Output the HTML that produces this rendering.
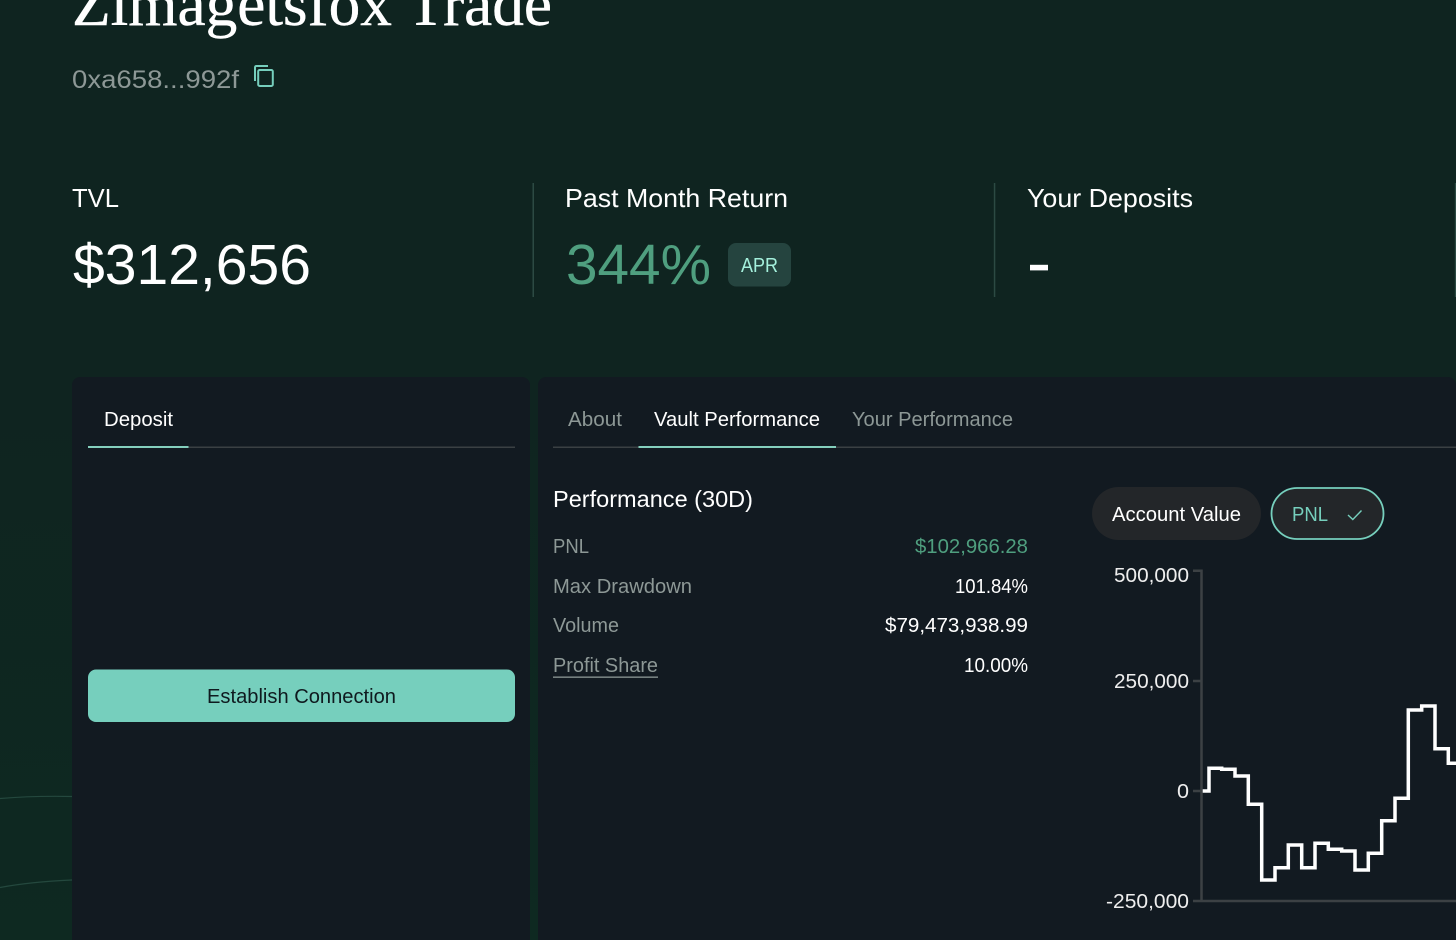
<!DOCTYPE html>
<html lang="en">
<head>
<meta charset="utf-8">
<title>Zimagetsfox Trade</title>
<style>
html,body{margin:0;padding:0;width:1456px;height:940px;overflow:hidden;background:#0f2420}
#page{position:absolute;left:0;top:0;width:1456px;height:940px;overflow:hidden}
#bg{position:absolute;left:0;top:0;width:1456px;height:940px;background:linear-gradient(180deg,#0f2420 0%,#0f2420 40%,#0e2921 100%)}
.panel{position:absolute;top:377px;height:563px;background:#121a21;border-radius:8px 8px 0 0}
svg{position:absolute;left:0;top:0}
text{font-family:"Liberation Sans",sans-serif;fill:#fff}
.g{fill:#8d9896}
</style>
</head>
<body>
<div id="page">
<div id="bg"></div>
<svg width="72" height="940">
  <path d="M0 798.500C24 796.500 48 796 72 796.500" fill="none" stroke="#24483e" stroke-width="1.200"/>
  <path d="M0 887.500C24 883 48 881 72 880" fill="none" stroke="#24483e" stroke-width="1.200"/>
</svg>
<div class="panel" style="left:72px;width:458px"></div>
<div class="panel" style="left:538px;width:918px"></div>
<svg width="1456" height="940" viewBox="0 0 1456 940">
  <text x="72" y="25" font-size="62" textLength="480" lengthAdjust="spacingAndGlyphs" stroke="#fff" stroke-width="0.400" style="font-family:'Liberation Serif',serif">Zimagetsfox Trade</text>
  <text x="72" y="88" font-size="25" textLength="167" lengthAdjust="spacingAndGlyphs" class="g">0xa658...992f</text>
  <rect x="258.200" y="70" width="14.600" height="16" rx="1.500" fill="none" stroke="#76cfbd" stroke-width="2"/>
  <path d="M255 81V67.500Q255 66 256.500 66H268" fill="none" stroke="#76cfbd" stroke-width="2"/>

  <rect x="532.500" y="183" width="1.500" height="114" fill="#2c4a43"/>
  <rect x="993.800" y="183" width="1.500" height="114" fill="#2c4a43"/>
  <rect x="1454.800" y="183" width="1.500" height="114" fill="#2c4a43"/>

  <text x="72" y="207" font-size="26" textLength="47" lengthAdjust="spacingAndGlyphs">TVL</text>
  <text x="565" y="207" font-size="26" textLength="223" lengthAdjust="spacingAndGlyphs">Past Month Return</text>
  <text x="1027" y="207" font-size="26" textLength="166" lengthAdjust="spacingAndGlyphs">Your Deposits</text>
  <text x="73" y="284" font-size="57" textLength="238" lengthAdjust="spacingAndGlyphs">$312,656</text>
  <text x="566" y="284" font-size="57" textLength="145" lengthAdjust="spacingAndGlyphs" style="fill:#4f9f7f">344%</text>
  <rect x="728" y="243" width="63" height="43.500" rx="8" fill="#25443f"/>
  <text x="741" y="272" font-size="20.500" textLength="37" lengthAdjust="spacingAndGlyphs" style="fill:#a4f0dc">APR</text>
  <rect x="1030" y="264.800" width="18" height="5.600" fill="#fff"/>

  <text x="104" y="426" font-size="20.500" textLength="69" lengthAdjust="spacingAndGlyphs">Deposit</text>
  <rect x="88" y="446.500" width="427" height="1.500" fill="#3a4043"/>
  <rect x="88" y="446" width="100.500" height="2" fill="#84cfbd"/>

  <text x="568" y="426" font-size="20.500" textLength="54" lengthAdjust="spacingAndGlyphs" class="g">About</text>
  <text x="654" y="426" font-size="20.500" textLength="166" lengthAdjust="spacingAndGlyphs">Vault Performance</text>
  <text x="852" y="426" font-size="20.500" textLength="161" lengthAdjust="spacingAndGlyphs" class="g">Your Performance</text>
  <rect x="553" y="446.500" width="903" height="1.500" fill="#3a4043"/>
  <rect x="638.500" y="446" width="197.500" height="2" fill="#84cfbd"/>

  <text x="553" y="507" font-size="23.500" textLength="200" lengthAdjust="spacingAndGlyphs">Performance (30D)</text>
  <text x="553" y="553" font-size="20.500" textLength="36" lengthAdjust="spacingAndGlyphs" class="g">PNL</text>
  <text x="553" y="593" font-size="20.500" textLength="139" lengthAdjust="spacingAndGlyphs" class="g">Max Drawdown</text>
  <text x="553" y="632" font-size="20.500" textLength="66" lengthAdjust="spacingAndGlyphs" class="g">Volume</text>
  <text x="553" y="672" font-size="20.500" textLength="105" lengthAdjust="spacingAndGlyphs" class="g">Profit Share</text>
  <rect x="553" y="676.500" width="105" height="1.300" fill="#8d9896"/>
  <text x="915" y="553" font-size="20.500" textLength="113" lengthAdjust="spacingAndGlyphs" style="fill:#4f9f7f">$102,966.28</text>
  <text x="955" y="593" font-size="20.500" textLength="73" lengthAdjust="spacingAndGlyphs">101.84%</text>
  <text x="885" y="632" font-size="20.500" textLength="143" lengthAdjust="spacingAndGlyphs">$79,473,938.99</text>
  <text x="964" y="672" font-size="20.500" textLength="64" lengthAdjust="spacingAndGlyphs">10.00%</text>

  <rect x="88" y="669.500" width="427" height="52.500" rx="8" fill="#76cfbd"/>
  <text x="207" y="703" font-size="20.500" textLength="189" lengthAdjust="spacingAndGlyphs" style="fill:#0f1a1f">Establish Connection</text>

  <rect x="1092" y="487" width="169" height="53" rx="26.500" fill="#232629"/>
  <text x="1112" y="521" font-size="20.500" textLength="129" lengthAdjust="spacingAndGlyphs">Account Value</text>
  <rect x="1271.500" y="488" width="112" height="51" rx="25.500" fill="#232629" stroke="#76cfbd" stroke-width="1.800"/>
  <text x="1292" y="521" font-size="20.500" textLength="36" lengthAdjust="spacingAndGlyphs" style="fill:#76cfbd">PNL</text>
  <path d="M1348 515L1352.800 519.500L1361.500 510.500" fill="none" stroke="#76cfbd" stroke-width="1.400"/>

  <path d="M1193 570.800H1201.500V901H1456M1193 681H1201M1193 791H1201M1193 901H1201" fill="none" stroke="#3c4144" stroke-width="2.500"/>
  <text x="1114" y="582" font-size="20.500" textLength="75" lengthAdjust="spacingAndGlyphs" style="fill:#eee">500,000</text>
  <text x="1114" y="688" font-size="20.500" textLength="75" lengthAdjust="spacingAndGlyphs" style="fill:#eee">250,000</text>
  <text x="1177" y="798" font-size="20.500" textLength="12" lengthAdjust="spacingAndGlyphs" style="fill:#eee">0</text>
  <text x="1106" y="908" font-size="20.500" textLength="83" lengthAdjust="spacingAndGlyphs" style="fill:#eee">-250,000</text>

  <path d="M1202.700 791H1209V768.300H1221.700V769.300H1235V776H1248.300V804.300H1261.700V880H1275V867.700H1288.300V845H1301.700V867.700H1315V843.300H1328.300V849.300H1341.700V851H1355V870H1368.300V853.300H1381.700V820.700H1395V798.300H1408.300V710H1421.700V706H1435V748.700H1448.300V763.300H1460" fill="none" stroke="#fff" stroke-width="3.500"/>
</svg>
</div>
</body>
</html>
